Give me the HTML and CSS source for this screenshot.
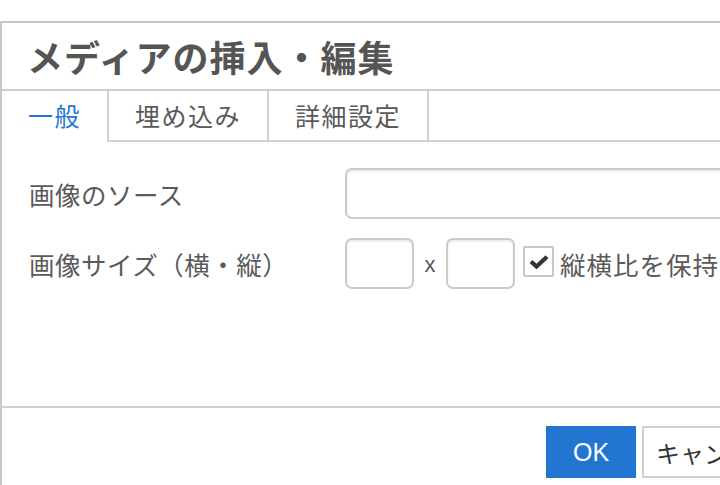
FILE: index.html
```html
<!DOCTYPE html>
<html lang="ja">
<head>
<meta charset="utf-8">
<title>メディアの挿入・編集</title>
<link rel="stylesheet" href="styles.css">
</head>
<body>
<div class="dialog">
  <div class="title">メディアの挿入・編集</div>
  <div class="tabs">
    <div class="tab active">一般</div>
    <div class="tab">埋め込み</div>
    <div class="tab last">詳細設定</div>
    <div class="tab-fill"></div>
  </div>
  <div class="body">
    <div class="row">
      <div class="label">画像のソース</div>
      <input class="input wide" type="text">
    </div>
    <div class="row">
      <div class="label">画像サイズ（横・縦）</div>
      <input class="input small" type="text">
      <span class="times">x</span>
      <input class="input small" type="text">
      <span class="check">
        <svg width="20" height="14" viewBox="0 0 20 14"><path d="M2 6.5 L7.5 11.5 L18 1.8" fill="none" stroke="#333" stroke-width="4.2" stroke-linejoin="miter"/></svg>
      </span>
      <span class="check-label">縦横比を保持</span>
    </div>
  </div>
  <div class="footer">
    <button class="btn primary">OK</button>
    <button class="btn">キャンセル</button>
  </div>
</div>
</body>
</html>
```

FILE: styles.css
```css
html, body {
  margin: 0;
  padding: 0;
  background: #fff;
  overflow: hidden;
  width: 720px;
  height: 485px;
}
body {
  font-family: "Noto Sans CJK JP", "Liberation Sans", sans-serif;
  color: #595959;
}
.dialog {
  margin-top: 21px;
  width: 1000px;
  border: 2px solid #c8c8c8;
  border-right: none;
  background: #fff;
}
.title {
  height: 66px;
  display: flex;
  align-items: center;
  padding-left: 25px;
  font-size: 36px;
  font-weight: 700;
  color: #555;
  letter-spacing: 1px;
  border-bottom: 2px solid #cfcfcf;
}
.tabs {
  display: flex;
  height: 51px;
}
.tab {
  box-sizing: border-box;
  width: 160px;
  display: flex;
  align-items: center;
  justify-content: center;
  font-size: 25px;
  letter-spacing: 1.5px;
  color: #5a5a5a;
  border-left: 2px solid #d0d0d0;
  border-bottom: 2px solid #d0d0d0;
  padding-bottom: 2px;
}
.tab.active {
  width: 105px;
  border: none;
  color: #2276d2;
  padding-bottom: 4px;
}
.tab.last {
  width: 162px;
  border-right: 2px solid #d0d0d0;
}
.tab-fill {
  flex: 1;
  border-bottom: 2px solid #d0d0d0;
}
.body {
  padding: 26px 0 0 27px;
  box-sizing: border-box;
  height: 264px;
}
.row {
  display: flex;
  align-items: center;
  margin-bottom: 19px;
}
.label {
  width: 316px;
  font-size: 25.5px;
  letter-spacing: 0.5px;
  color: #5a5a5a;
}
.input {
  box-sizing: border-box;
  height: 51px;
  border: 2px solid #cbcbcb;
  border-radius: 7px;
  box-shadow: inset 0 2px 2px rgba(0,0,0,0.08);
  background: #fff;
  margin: 0;
  padding: 0 10px;
  font-size: 22px;
}
.input.wide {
  width: 500px;
}
.input.small {
  width: 69px;
}
.times {
  width: 32px;
  text-align: center;
  font-family: "Liberation Sans", sans-serif;
  font-size: 22px;
  color: #555;
  padding-top: 2px;
}
.check {
  box-sizing: border-box;
  width: 31px;
  height: 31px;
  border: 2px solid #c8c8c8;
  border-radius: 2px;
  margin-left: 8px;
  display: flex;
  align-items: center;
  justify-content: center;
  margin-top: -4px;
}
.check-label {
  margin-left: 6px;
  font-size: 25.5px;
  letter-spacing: 1px;
  color: #5a5a5a;
  white-space: nowrap;
}
.footer {
  border-top: 2px solid #d0d0d0;
  padding: 18px 0 18px 544px;
  display: flex;
  gap: 6px;
}
.btn {
  height: 52px;
  border: 2px solid #d0d0d0;
  background: #fff;
  font-family: "Noto Sans CJK JP", sans-serif;
  font-size: 24px;
  color: #333;
  padding: 0 12px;
  margin: 0;
  white-space: nowrap;
}
.btn.primary {
  width: 90px;
  background: #2276d2;
  border-color: #2276d2;
  color: #fff;
  font-family: "Liberation Sans", sans-serif;
  font-size: 25px;
}
```
